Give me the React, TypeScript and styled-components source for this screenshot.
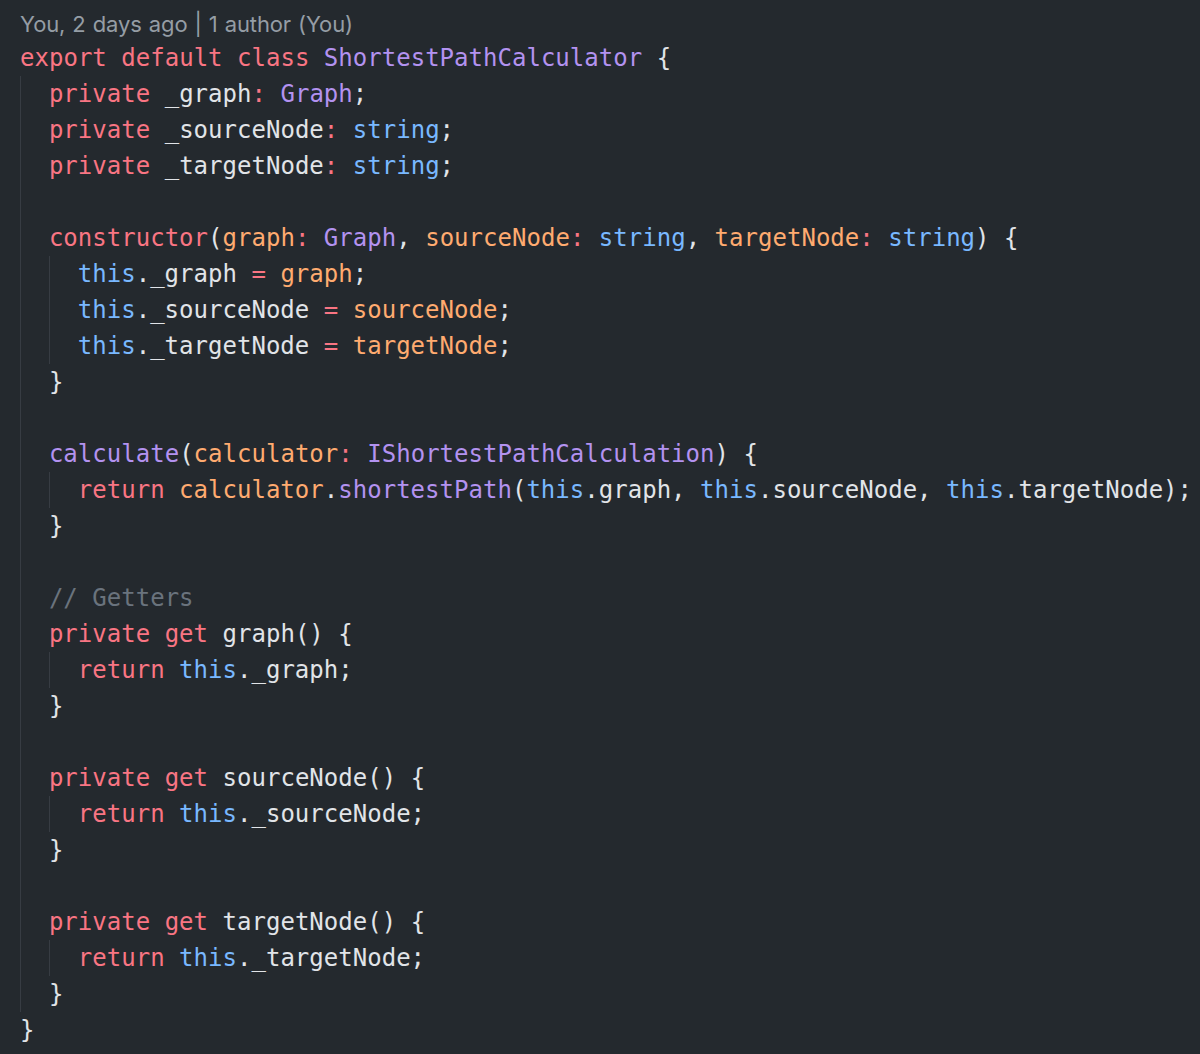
import React from "react";
import styled, { createGlobalStyle } from "styled-components";

const Global = createGlobalStyle`
  html, body { margin: 0; padding: 0; background: #24292e; }
  body { width: 1200px; height: 1054px; overflow: hidden; }
`;

const Editor = styled.div`
  width: 1200px;
  height: 1054px;
  background: #24292e;
  box-sizing: border-box;
  padding: 8px 0 0 20px;
`;

const Lens = styled.div`
  height: 32px;
  line-height: 32px;
  font-family: Inter, "Noto Sans", sans-serif;
  font-size: 22px;
  letter-spacing: -0.12px;
  word-spacing: 1px;
  color: #959da5;
`;

const Code = styled.div`
  font-family: "DejaVu Sans Mono", "Liberation Mono", monospace;
  font-size: 24px;
  letter-spacing: 0.02px;
  color: #e1e4e8;
  white-space: pre;
`;

const Line = styled.div`
  display: flex;
  height: 36px;
  line-height: 36px;
`;

const Guide = styled.span`
  display: inline-block;
  width: 2ch;
  height: 36px;
  flex: none;
  box-sizing: border-box;
  border-left: 1.5px solid #373c43;
`;

const Tok = styled.span<{ $c: string }>`
  color: ${(p) => p.$c};
`;

const K = "#f97583";
const E = "#b392f0";
const C = "#79b8ff";
const V = "#ffab70";
const T = "#e1e4e8";
const M = "#6a737d";

type Seg = [string, string];
type L = { indent: number; segs: Seg[] };

const lines: L[] = [
  { indent: 0, segs: [["export default class ", K], ["ShortestPathCalculator", E], [" {", T]] },
  { indent: 1, segs: [["private ", K], ["_graph", T], [": ", K], ["Graph", E], [";", T]] },
  { indent: 1, segs: [["private ", K], ["_sourceNode", T], [": ", K], ["string", C], [";", T]] },
  { indent: 1, segs: [["private ", K], ["_targetNode", T], [": ", K], ["string", C], [";", T]] },
  { indent: 1, segs: [] },
  {
    indent: 1,
    segs: [
      ["constructor", K], ["(", T], ["graph", V], [": ", K], ["Graph", E], [", ", T],
      ["sourceNode", V], [": ", K], ["string", C], [", ", T],
      ["targetNode", V], [": ", K], ["string", C], [") {", T],
    ],
  },
  { indent: 2, segs: [["this", C], ["._graph ", T], ["= ", K], ["graph", V], [";", T]] },
  { indent: 2, segs: [["this", C], ["._sourceNode ", T], ["= ", K], ["sourceNode", V], [";", T]] },
  { indent: 2, segs: [["this", C], ["._targetNode ", T], ["= ", K], ["targetNode", V], [";", T]] },
  { indent: 1, segs: [["}", T]] },
  { indent: 1, segs: [] },
  {
    indent: 1,
    segs: [["calculate", E], ["(", T], ["calculator", V], [": ", K], ["IShortestPathCalculation", E], [") {", T]],
  },
  {
    indent: 2,
    segs: [
      ["return ", K], ["calculator", V], [".", T], ["shortestPath", E], ["(", T],
      ["this", C], [".graph, ", T], ["this", C], [".sourceNode, ", T], ["this", C], [".targetNode);", T],
    ],
  },
  { indent: 1, segs: [["}", T]] },
  { indent: 1, segs: [] },
  { indent: 1, segs: [["// Getters", M]] },
  { indent: 1, segs: [["private get ", K], ["graph() {", T]] },
  { indent: 2, segs: [["return ", K], ["this", C], ["._graph;", T]] },
  { indent: 1, segs: [["}", T]] },
  { indent: 1, segs: [] },
  { indent: 1, segs: [["private get ", K], ["sourceNode() {", T]] },
  { indent: 2, segs: [["return ", K], ["this", C], ["._sourceNode;", T]] },
  { indent: 1, segs: [["}", T]] },
  { indent: 1, segs: [] },
  { indent: 1, segs: [["private get ", K], ["targetNode() {", T]] },
  { indent: 2, segs: [["return ", K], ["this", C], ["._targetNode;", T]] },
  { indent: 1, segs: [["}", T]] },
  { indent: 0, segs: [["}", T]] },
];

export default function App() {
  return (
    <>
      <Global />
      <Editor>
        <Lens>You, 2 days ago | 1 author (You)</Lens>
        <Code>
          {lines.map((l, i) => (
            <Line key={i}>
              {Array.from({ length: l.indent }).map((_, j) => (
                <Guide key={j} />
              ))}
              {l.segs.map(([t, c], j) => (
                <Tok key={j} $c={c}>
                  {t}
                </Tok>
              ))}
            </Line>
          ))}
        </Code>
      </Editor>
    </>
  );
}
